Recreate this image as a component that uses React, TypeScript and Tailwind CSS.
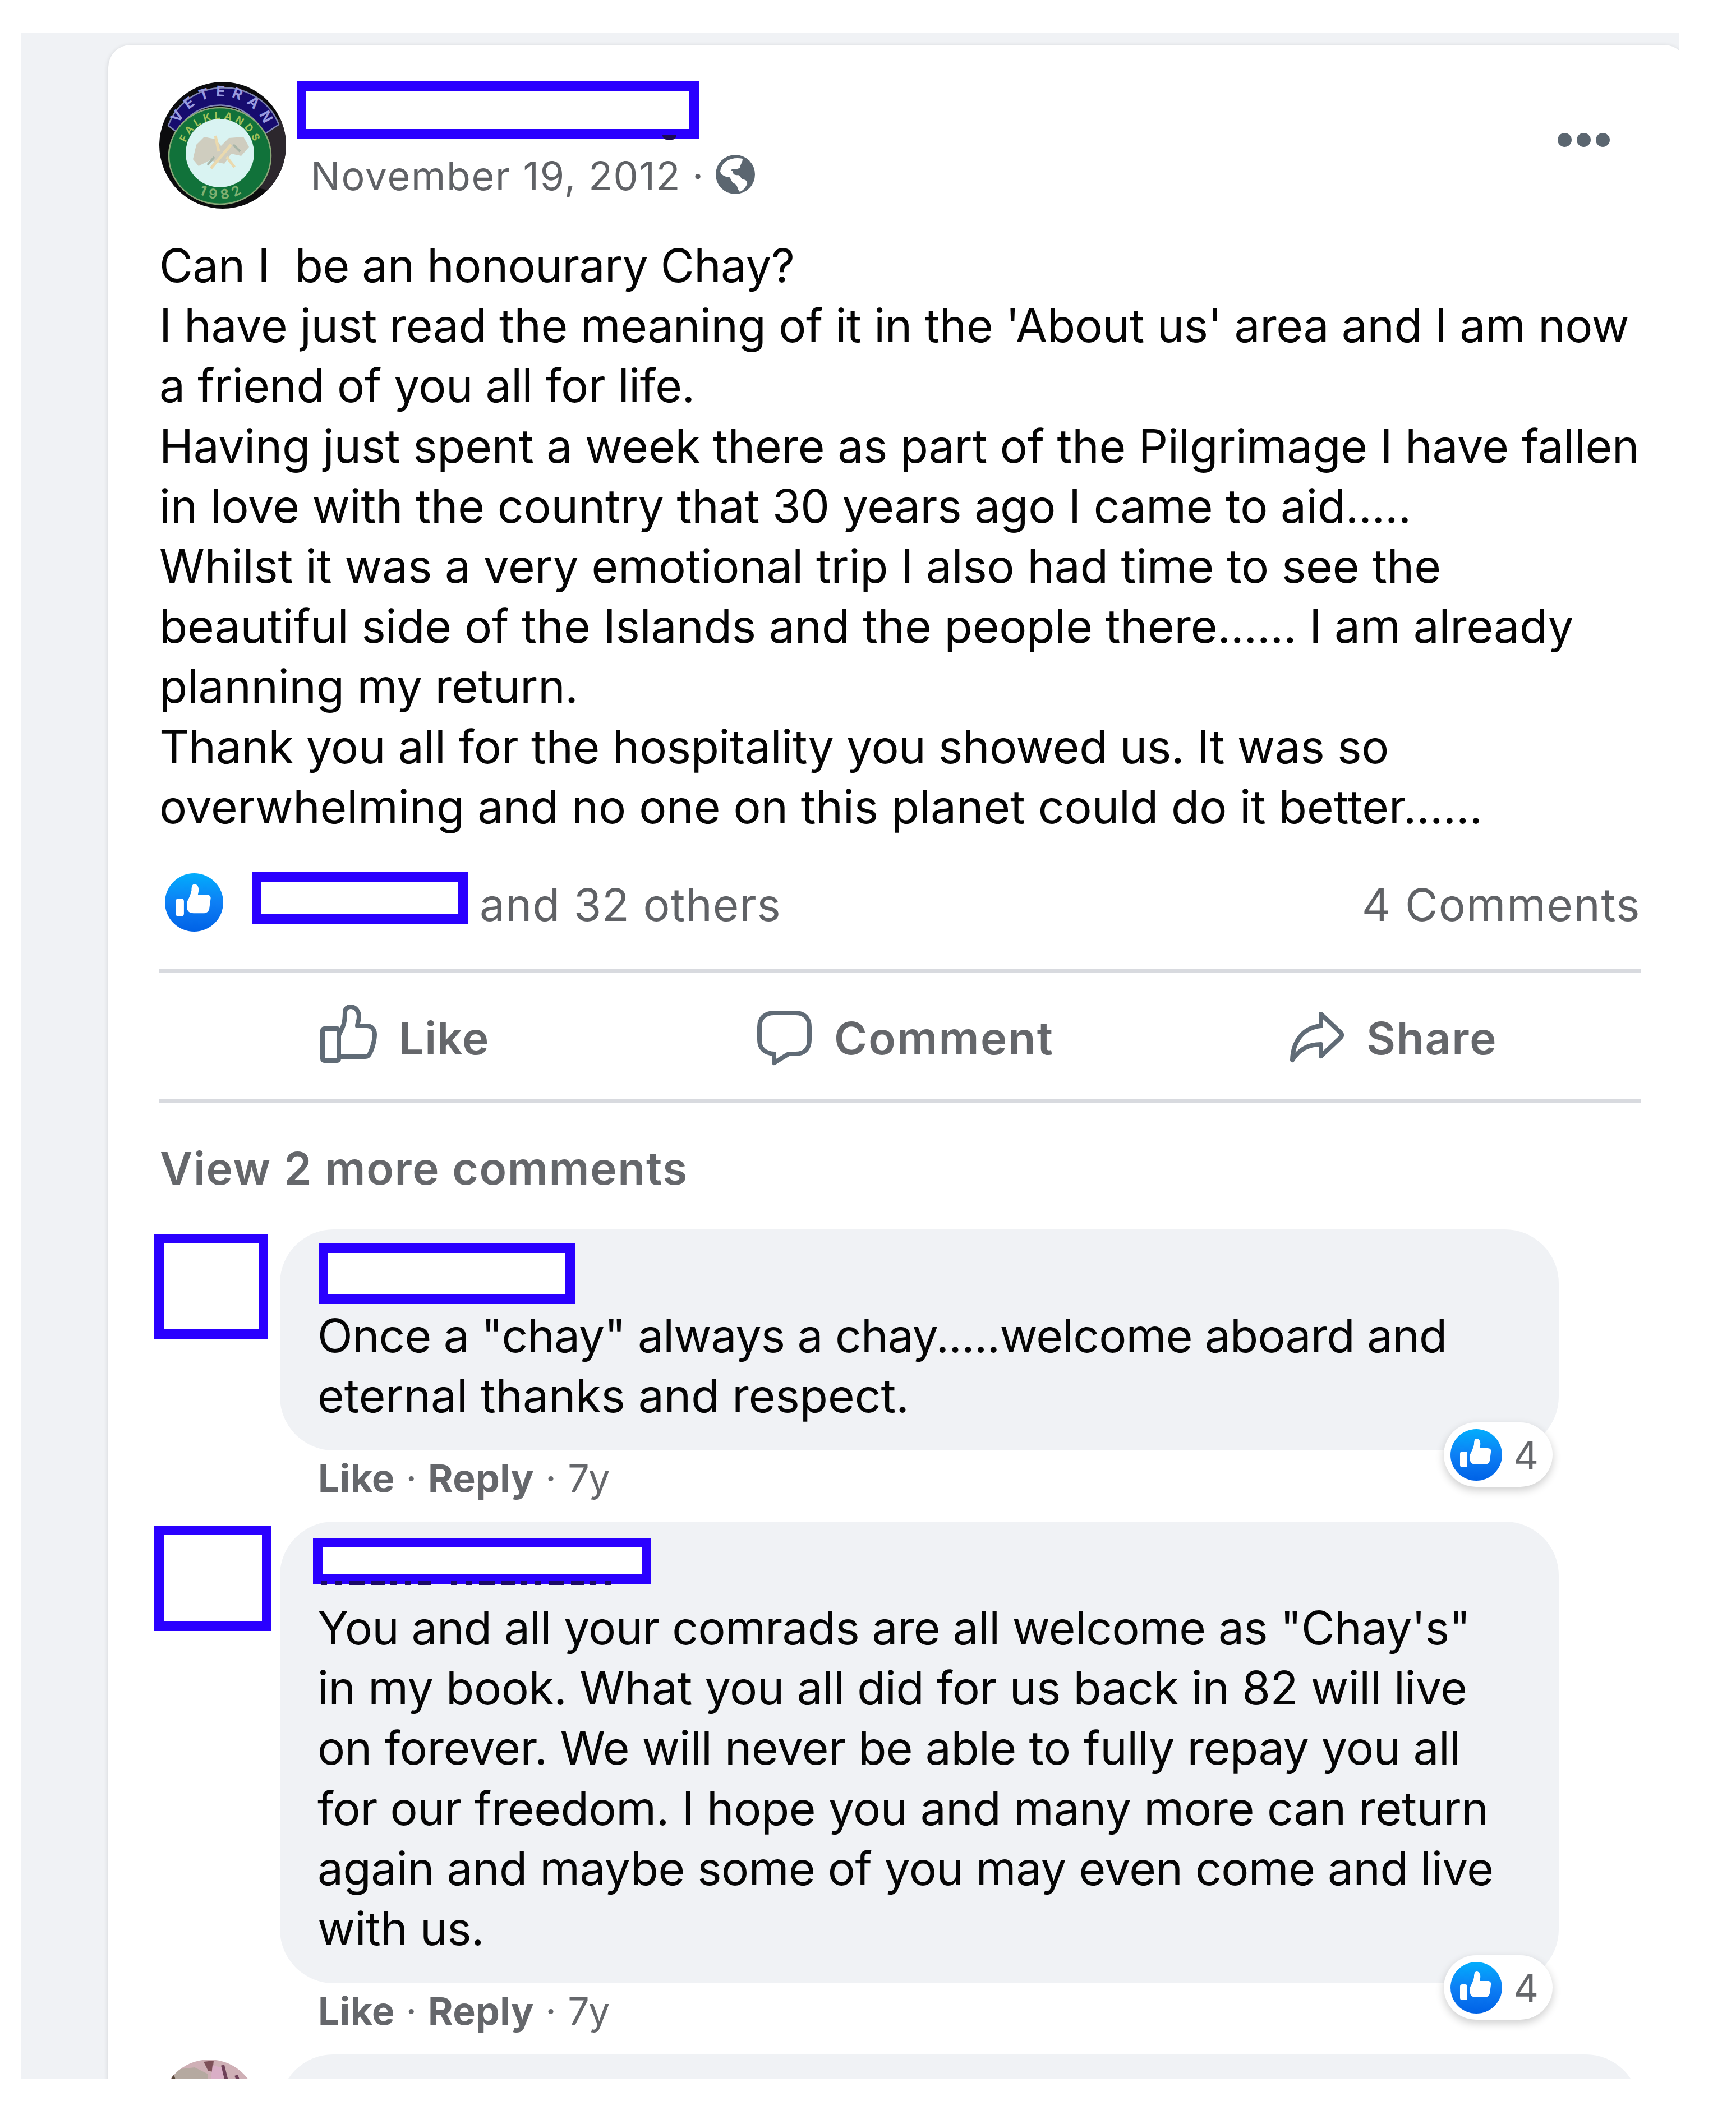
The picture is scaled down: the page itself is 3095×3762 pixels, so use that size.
import type { ReactNode } from 'react'

type Line = { text: string; track: string }

const POST: Line[] = [
  { text: 'Can I  be an honourary Chay?', track: 'tracking-[-0.54px]' },
  { text: "I have just read the meaning of it in the 'About us' area and I am now", track: 'tracking-[-0.39px]' },
  { text: 'a friend of you all for life.', track: 'tracking-[-0.45px]' },
  { text: 'Having just spent a week there as part of the Pilgrimage I have fallen', track: 'tracking-[-0.24px]' },
  { text: 'in love with the country that 30 years ago I came to aid.....', track: 'tracking-[-0.17px]' },
  { text: 'Whilst it was a very emotional trip I also had time to see the', track: 'tracking-[-0.17px]' },
  { text: 'beautiful side of the Islands and the people there...... I am already', track: 'tracking-[-0.14px]' },
  { text: 'planning my return.', track: 'tracking-[-0.24px]' },
  { text: 'Thank you all for the hospitality you showed us. It was so', track: 'tracking-[-0.34px]' },
  { text: 'overwhelming and no one on this planet could do it better......', track: 'tracking-[-0.07px]' },
]

const COMMENT_1: Line[] = [
  { text: 'Once a "chay" always a chay.....welcome aboard and', track: 'tracking-[-0.82px]' },
  { text: 'eternal thanks and respect.', track: 'tracking-[-0.04px]' },
]

const COMMENT_2: Line[] = [
  { text: 'You and all your comrads are all welcome as "Chay\'s"', track: 'tracking-[-0.62px]' },
  { text: 'in my book. What you all did for us back in 82 will live', track: 'tracking-[-0.34px]' },
  { text: 'on forever. We will never be able to fully repay you all', track: 'tracking-[-0.47px]' },
  { text: 'for our freedom. I hope you and many more can return', track: 'tracking-[-0.37px]' },
  { text: 'again and maybe some of you may even come and live', track: 'tracking-[-0.53px]' },
  { text: 'with us.', track: 'tracking-[-0.45px]' },
]

function Lines({ lines }: { lines: Line[] }) {
  return (
    <>
      {lines.map((l) => (
        <p key={l.text} className={`whitespace-pre text-[82px] leading-[107.2px] text-[#050505] ${l.track}`}>
          {l.text}
        </p>
      ))}
    </>
  )
}

function Redacted({ className }: { className: string }) {
  return <div className={`shrink-0 border-[17px] border-[#2a00ff] bg-white ${className}`} />
}

function LikeBadge({ id, className }: { id: string; className: string }) {
  return (
    <svg viewBox="0 0 92 92" className={`shrink-0 ${className}`}>
      <defs>
        <linearGradient id={id} x1="0" y1="0" x2="0" y2="1">
          <stop offset="0" stopColor="#02adfc" />
          <stop offset="0.5" stopColor="#0d7ff5" />
          <stop offset="1" stopColor="#0062e6" />
        </linearGradient>
      </defs>
      <circle cx="46" cy="46" r="46" fill={`url(#${id})`} />
      <rect x="17" y="40" width="13" height="28" rx="4" fill="#fff" />
      <path
        d="M35 45C38 39 41 33 42 27C42 21 43 17 47 17C52 17.500 54 23 53 29L52 34H66C71 34 73 37 72 41L70 56C69 60 66 63 62 63H45C40 63 36 61 35 56Z"
        fill="#fff"
      />
    </svg>
  )
}

function Emblem() {
  return (
    <svg viewBox="0 0 226 226" className="mt-px ml-px size-[226px] shrink-0">
      <defs>
        <clipPath id="disc">
          <circle cx="113" cy="113" r="113" />
        </clipPath>
        <path id="arcTop" d="M27 112A84 86 0 0 1 195 112" />
        <path id="arcMid" d="M43 131A65 65 0 0 1 173 131" />
        <path id="arcLow" d="M30 131A78 78 0 0 0 186 131" />
      </defs>
      <g clipPath="url(#disc)">
        <rect width="226" height="226" fill="#0c0c0e" />
        <path d="M190 80L226 60V200L180 190Z" fill="#2c272d" />
        <path d="M16 78A104 98 0 0 1 213 76L186 94A84 84 0 0 0 32 90Z" fill="#160c6e" stroke="#7f86b4" strokeWidth="2.500" />
        <ellipse cx="108" cy="132" rx="91" ry="86" fill="#11723a" stroke="#8aa878" strokeWidth="2.500" />
        <circle cx="108" cy="127" r="61" fill="#d9f3f2" />
        <path
          d="M60 138L66 112L80 98L100 102L110 114L124 100L150 98L160 116L146 132L128 128L116 146L90 140L70 150Z"
          fill="#cfcdbf"
        />
        <path d="M92 154L128 112M100 96L106 124M120 134L134 152" stroke="#ead9ae" strokeWidth="5" />
        <path d="M86 148L98 134M132 112L144 124" stroke="#a8b5a8" strokeWidth="4" />
        <text fontSize="26" fontWeight="700" fill="#9a9be0" letterSpacing="11" textAnchor="middle">
          <textPath href="#arcTop" startOffset="52%">VETERAN</textPath>
        </text>
        <text fontSize="18" fontWeight="700" fill="#a3c25a" letterSpacing="6" textAnchor="middle">
          <textPath href="#arcMid" startOffset="51%">FALKLANDS</textPath>
        </text>
        <text fontSize="24" fontWeight="700" fill="#7fb070" letterSpacing="8" textAnchor="middle">
          <textPath href="#arcLow" startOffset="52%">1982</textPath>
        </text>
      </g>
    </svg>
  )
}

function Globe() {
  return (
    <svg viewBox="0 0 70 70" className="mt-[4px] size-[70px]">
      <circle cx="35" cy="35" r="35" fill="#5b6670" />
      <path
        d="M18 12C27 6 38 5 48 7C48 13 44 17 43 23C37 27 31 24 27 27L31 30C30 34 34 37 40 36C45 38 45 43 49 44C54 44 57 48 56 53C53 56 52 62 43 66C38 62 40 54 33 51C27 49 28 41 23 39C17 40 10 36 8 30C9 22 13 16 18 12Z"
        fill="#fff"
      />
    </svg>
  )
}

function Meta() {
  return (
    <div className="mt-[9px] mb-[2px] ml-[68px] flex h-20 text-[68px] leading-[80px] tracking-[0.4px] text-[#65676b]">
      <span className="font-bold">Like</span>
      <span className="w-[59px] text-center">·</span>
      <span className="font-bold">Reply</span>
      <span className="w-[60px] text-center">·</span>
      <span className="tracking-[-1.5px]">7y</span>
    </div>
  )
}

function Bubble({ id, className, children }: { id: string; className: string; children: ReactNode }) {
  return (
    <div className={`relative w-[2280px] rounded-[96px] bg-[#f0f2f5] ${className}`}>
      {children}
      <div className="absolute right-[11px] -bottom-[65px] flex h-[115px] w-[194px] items-center rounded-full bg-white pl-[12px] shadow-[0_6px_16px_rgba(0,0,0,0.2)]">
        <LikeBadge id={id} className="size-[92px]" />
        <span className="mt-[2px] ml-[20px] text-[70px] leading-none text-[#65676b]">4</span>
      </div>
    </div>
  )
}

export default function App() {
  return (
    <div className="h-[3762px] w-[3095px] overflow-hidden bg-white pt-[58px] pl-[38px] font-[Inter,sans-serif]">
      <div className="h-[3648px] w-[2956px] overflow-hidden bg-[#f0f2f5] pt-[22px] pl-[155px]">
        <div className="h-[3700px] w-[2814px] rounded-[40px] bg-white pt-[65px] pl-[90px] shadow-[0_2px_8px_rgba(0,0,0,0.15)]">
          {/* Header */}
          <div className="flex h-[275px] w-[2642px] items-start">
            <Emblem />
            <div className="ml-[19px]">
              <div className="relative">
                <Redacted className="h-[102px] w-[717px]" />
                <div className="absolute top-[96px] left-[652px] h-[8px] w-[25px] rounded-b-full bg-[#1c0a55]" />
              </div>
              <div className="mt-[25px] ml-[25px] flex h-[84px] text-[70px] leading-[84px] tracking-[1.7px] text-[#606266]">
                <span>November 19, 2012</span>
                <span className="w-[62px] text-center">·</span>
                <Globe />
              </div>
            </div>
            <div className="mt-[92px] mr-[55px] ml-auto flex gap-[9px]">
              <span className="size-[25px] rounded-full bg-[#5b6670]" />
              <span className="size-[25px] rounded-full bg-[#5b6670]" />
              <span className="size-[25px] rounded-full bg-[#5b6670]" />
            </div>
          </div>

          <div className="ml-px">
            <Lines lines={POST} />
          </div>

          {/* Reactions */}
          <div className="flex h-[236px] w-[2642px] items-start text-[80px] leading-[107.2px] text-[#606266]">
            <LikeBadge id="like-post" className="mt-[65px] ml-[11px] size-[104px]" />
            <Redacted className="mt-[63px] ml-[51px] h-[92px] w-[385px]" />
            <span className="mt-[67px] ml-[21px] tracking-[1px]">and 32 others</span>
            <span className="mt-[67px] ml-auto tracking-[1.5px]">4 Comments</span>
          </div>

          {/* Actions */}
          <div className="flex h-[239px] w-[2642px] items-start border-y-[7px] border-[#d8dadf] pt-[55px] pl-[288px] text-[80px] leading-[107.2px] font-semibold text-[#65676b]">
            <div className="flex w-[779px] gap-[39px]">
              <svg viewBox="0 0 101 110" className="mt-px h-[110px] w-[101px]" fill="none" stroke="#606b76" strokeWidth="8" strokeLinejoin="round">
                <rect x="4" y="43" width="29" height="57" rx="3" />
                <path d="M33 55L40 40C44 31 44 22 44 14C44 7 49 4 54 4C63 4 69 12 69 22C69 29 66 34 66 38H83C92 38 97 45 97 53C97 61 94 76 89 86C87 91 84 93 80 93H34" />
              </svg>
              <span className="mt-[7px] tracking-[1px]">Like</span>
            </div>
            <div className="flex w-[949px] gap-10">
              <svg viewBox="0 0 97 110" className="mt-px h-[110px] w-[97px]" fill="none" stroke="#606b76" strokeWidth="8" strokeLinejoin="round">
                <path d="M30 15H68C84 15 93 24 93 40V63C93 79 84 88 68 88H56L30 104V88C13 87 4 78 4 63V40C4 24 14 15 30 15Z" />
              </svg>
              <span className="mt-[7px] tracking-[2.3px]">Comment</span>
            </div>
            <div className="flex gap-10">
              <svg viewBox="0 0 97 110" className="mt-px h-[110px] w-[97px]" fill="none" stroke="#606b76" strokeWidth="8" strokeLinejoin="round">
                <path d="M56 17L91 50C94 53 94 56 91 59L56 92V71C34 71 18 79 5 99C6 66 24 41 56 38Z" />
              </svg>
              <span className="mt-[7px] tracking-[1.8px]">Share</span>
            </div>
          </div>

          <p className="mt-[62px] ml-[2px] h-[107px] text-[80px] leading-[107.2px] font-semibold tracking-[1.7px] text-[#65676b]">
            View 2 more comments
          </p>

          {/* Comments */}
          <div className="mt-[56px] flex items-start">
            <Redacted className="mt-[8px] -ml-[8px] h-[187px] w-[203px]" />
            <div className="ml-[21px]">
              <Bubble id="like-c1" className="h-[394px] pt-[25px] pl-[67px]">
                <Redacted className="mb-[3px] ml-[2px] h-[108px] w-[457px]" />
                <Lines lines={COMMENT_1} />
              </Bubble>
              <Meta />
            </div>
          </div>

          <div className="mt-[36px] flex items-start">
            <Redacted className="mt-[7px] -ml-[8px] h-[188px] w-[209px]" />
            <div className="ml-[15px]">
              <Bubble id="like-c2" className="h-[823px] pt-[29px] pl-[67px]">
                <div className="relative mb-[25px] -ml-[8px]">
                  <Redacted className="h-[82px] w-[603px]" />
                  <svg viewBox="0 0 530 8" className="absolute top-[76px] left-[14px] h-[8px] w-[530px]">
                    <path d="M0 4H196M232 4H530" stroke="#1c0a66" strokeWidth="8" strokeDasharray="11 15 11 13 28 12 24 10" />
                  </svg>
                </div>
                <Lines lines={COMMENT_2} />
              </Bubble>
              <Meta />
            </div>
          </div>

          <div className="mt-[36px] flex items-start">
            <svg viewBox="0 0 172 172" className="mt-[9px] ml-[4px] size-[172px] shrink-0">
              <clipPath id="face">
                <circle cx="86" cy="86" r="86" />
              </clipPath>
              <g clipPath="url(#face)">
                <rect width="172" height="172" fill="#cfb0b6" />
                <path d="M26 18L60 14L84 26L82 60H20Z" fill="#b5a9a0" />
                <path d="M76 4L94 2L92 22L84 20Z" fill="#7d5058" />
                <path d="M92 10L112 16L110 60H86Z" fill="#d9aec6" />
                <path d="M110 10L116 34L108 60M134 28L146 60" stroke="#6e3f58" strokeWidth="6" fill="none" />
                <path d="M10 60L22 24L34 60Z" fill="#574638" />
              </g>
            </svg>
            <div className="ml-[39px] h-[200px] w-[2425px] rounded-[96px] bg-[#f0f2f5]" />
          </div>
        </div>
      </div>
    </div>
  )
}
